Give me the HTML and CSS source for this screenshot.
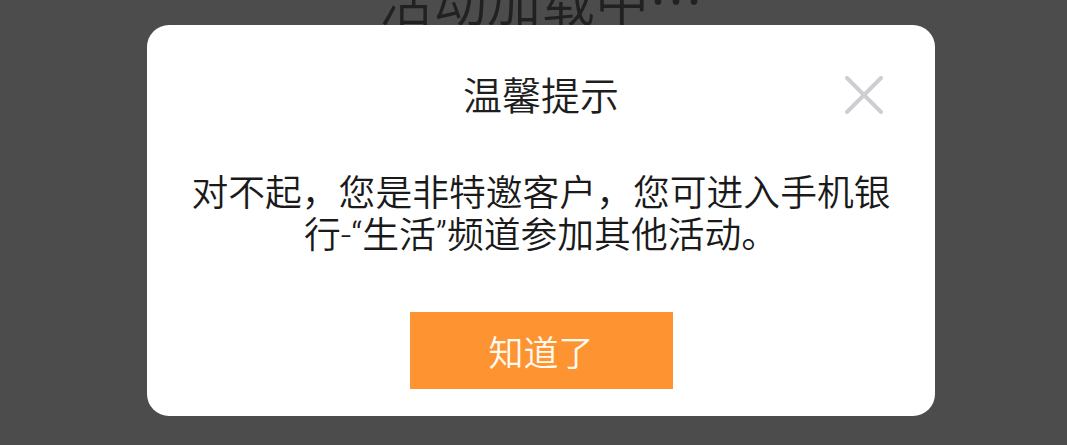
FILE: index.html
```html
<!DOCTYPE html>
<html lang="zh-CN">
<head>
<meta charset="utf-8">
<title>温馨提示</title>
<link rel="stylesheet" href="styles.css">
</head>
<body>
<div class="page">
  <div class="loading">活动加载中…</div>
</div>
<div class="overlay">
  <div class="dialog">
    <div class="dialog-title">温馨提示</div>
    <button class="close" aria-label="关闭">
      <svg viewBox="0 0 38 38" width="38" height="38">
        <path d="M2 2 L36 36 M36 2 L2 36" stroke="#cdced2" stroke-width="4" stroke-linecap="round" fill="none"/>
      </svg>
    </button>
    <div class="dialog-body">对不起，您是非特邀客户，您可进入手机银行-“生活”频道参加其他活动。</div>
    <div class="actions">
      <button class="ok">知道了</button>
    </div>
  </div>
</div>
</body>
</html>
```

FILE: styles.css
```css
html, body {
  margin: 0;
  padding: 0;
  height: 100%;
  overflow: hidden;
}
body {
  background: #ffffff;
  font-family: Roboto, "Noto Sans CJK SC", sans-serif;
  font-weight: 350;
  position: relative;
}
.page {
  padding-left: 15px;
}
.loading {
  text-align: center;
  font-family: "Noto Sans CJK SC", sans-serif;
  font-size: 54px;
  line-height: 54px;
  margin-top: -28px;
  color: #6e6e6e;
}
.overlay {
  position: absolute;
  inset: 0;
  background: rgba(0, 0, 0, 0.7);
  display: flex;
  justify-content: center;
  align-items: flex-start;
  padding: 25px 0 0 15px;
}
.dialog {
  position: relative;
  width: 788px;
  box-sizing: border-box;
  background: #ffffff;
  border-radius: 22px;
  padding: 52px 38px 27px;
  display: flex;
  flex-direction: column;
  align-items: center;
}
.dialog-title {
  font-size: 39px;
  line-height: 40px;
  color: #1e1e1e;
}
.close {
  position: absolute;
  top: 51px;
  right: 52px;
  width: 38px;
  height: 38px;
  padding: 0;
  border: 0;
  background: none;
  display: block;
}
.close svg {
  display: block;
}
.dialog-body {
  margin-top: 56px;
  font-size: 36.8px;
  line-height: 42px;
  color: #1a1a1a;
  text-align: center;
}
.actions {
  margin-top: 55px;
}
.ok {
  width: 263px;
  height: 77px;
  border: 0;
  border-radius: 0;
  background: #fe9431;
  color: #fffaf0;
  font-family: Roboto, "Noto Sans CJK SC", sans-serif;
  font-weight: 350;
  font-size: 35px;
  padding: 0;
  display: block;
}
```
